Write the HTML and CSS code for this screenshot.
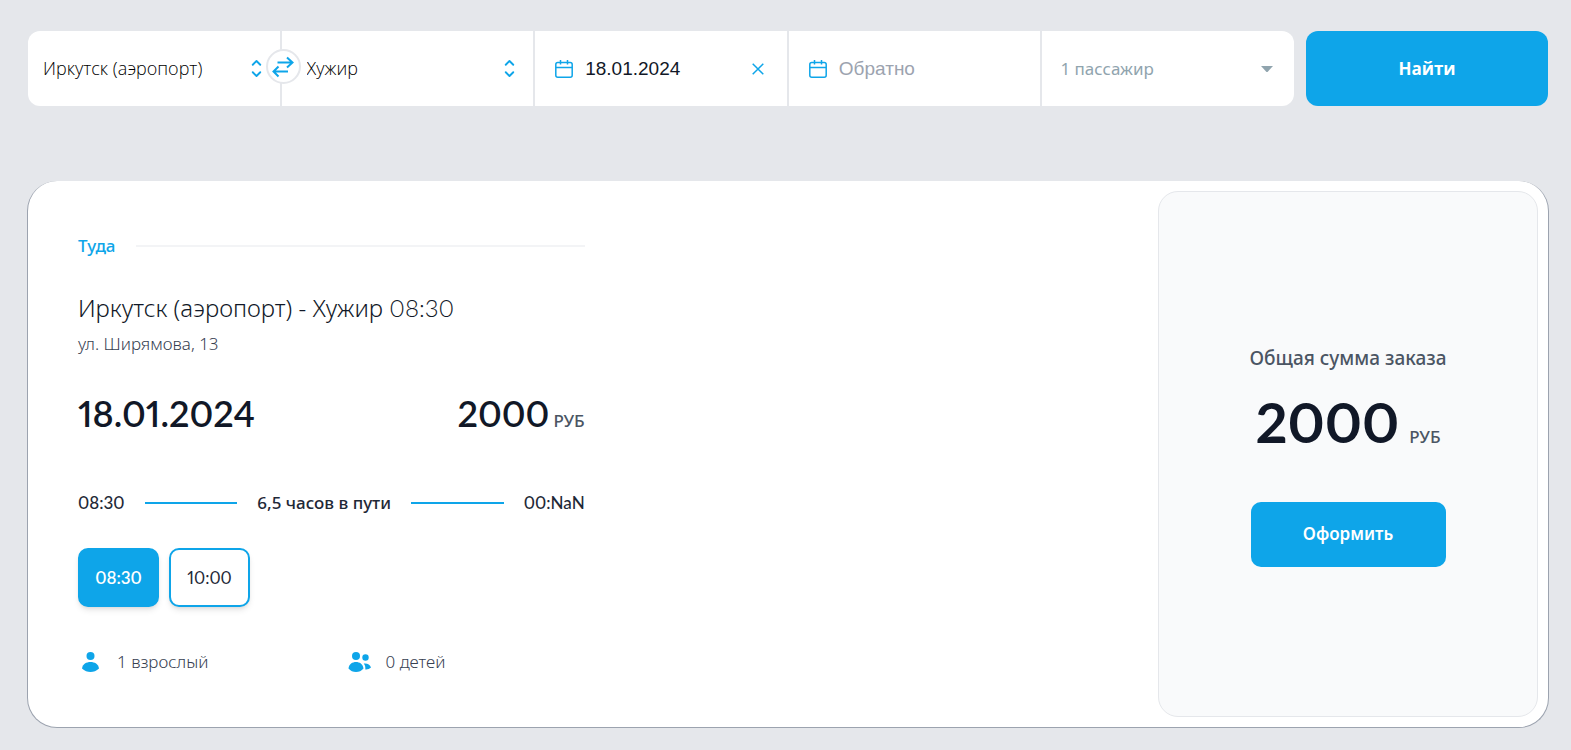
FILE: index.html
```html
<!DOCTYPE html>
<html lang="ru">
<head>
<meta charset="utf-8">
<meta name="viewport" content="width=device-width, initial-scale=1">
<title>Иркутск (аэропорт) - Хужир</title>
<link rel="stylesheet" href="styles.css">
</head>
<body>
<main class="page">
  <form class="search">
    <div class="fields">
      <div class="field place">
        <input class="place-input" type="text" aria-label="Откуда" value="Иркутск (аэропорт)">
        <button class="icon-button" type="button" aria-label="Список пунктов отправления">
          <svg class="updown" viewBox="0 0 20 20"><path d="M7 7l3-3 3 3m0 6l-3 3-3-3"/></svg>
        </button>
        <button class="swap" type="button" aria-label="Поменять местами">
          <svg class="swap-icon" viewBox="0 0 22 22"><path d="M5.500 6.500H20M15 1.500l5.500 5L15 11.500M16 15.500H2M6.500 10.500L1.500 15.500l5 5"/></svg>
        </button>
      </div>
      <div class="field place">
        <input class="place-input" type="text" aria-label="Куда" value="Хужир">
        <button class="icon-button" type="button" aria-label="Список пунктов прибытия">
          <svg class="updown" viewBox="0 0 20 20"><path d="M7 7l3-3 3 3m0 6l-3 3-3-3"/></svg>
        </button>
      </div>
      <div class="field date">
        <svg class="calendar" viewBox="0 0 18 18"><rect x="0.800" y="2.500" width="16.400" height="14.700" rx="2"/><path d="M1 7.500H17M5.500 0V4.500M12.500 0V4.500"/></svg>
        <input class="date-input" type="text" aria-label="Дата туда" value="18.01.2024">
        <button class="icon-button" type="button" aria-label="Очистить дату">
          <svg class="clear" viewBox="0 0 12 12"><path d="M0.700 0.700L11.300 11.300M11.300 0.700L0.700 11.300"/></svg>
        </button>
      </div>
      <div class="field date">
        <svg class="calendar" viewBox="0 0 18 18"><rect x="0.800" y="2.500" width="16.400" height="14.700" rx="2"/><path d="M1 7.500H17M5.500 0V4.500M12.500 0V4.500"/></svg>
        <input class="date-input" type="text" aria-label="Дата обратно" placeholder="Обратно">
      </div>
      <div class="field passengers">
        <select class="passengers-select" aria-label="Пассажиры"><option>1 пассажир</option></select>
        <svg class="caret" viewBox="0 0 12 6"><path d="M0 0H12L7 5.500Q6 6.500 5 5.500Z"/></svg>
      </div>
    </div>
    <button class="find" type="submit">Найти</button>
  </form>

  <article class="trip">
    <section class="details">
      <div class="direction"><span>Туда</span><i class="rule"></i></div>
      <h1 class="title">Иркутск (аэропорт) - Хужир <span class="title-time">08:30</span></h1>
      <p class="address">ул. Ширямова, 13</p>
      <div class="summary">
        <span class="big">18.01.2024</span>
        <span class="price"><span class="big">2000</span><span class="currency">РУБ</span></span>
      </div>
      <div class="timeline">
        <span class="num">08:30</span><i class="segment"></i><span>6,5 часов в пути</span><i class="segment"></i><span class="num">00:NaN</span>
      </div>
      <div class="times">
        <button class="time time-active" type="button">08:30</button>
        <button class="time" type="button">10:00</button>
      </div>
      <div class="people">
        <div class="person">
          <svg class="person-icon" viewBox="0 0 26 26"><circle cx="12.500" cy="7" r="4"/><path d="M4 19.500C4.500 15 8.500 13 12.500 13s8 2 8.500 6.500C18.500 22 15.500 23 12.500 23s-6-1-8.500-3.500Z"/></svg>
          <span>1 взрослый</span>
        </div>
        <div class="person">
          <svg class="person-icon" viewBox="0 0 26 26"><circle cx="9" cy="7" r="4"/><circle cx="18.500" cy="8.500" r="3.200"/><path d="M1.500 19.500C2 15 5.500 13 9 13s7 2 7.500 6.500C14.500 22 12 23 9 23s-5.500-1-7.500-3.500ZM16.700 14.600C20 14 23 15.500 24 18.500C22.500 20 20.500 20.600 18.300 20.400C18.600 18.200 18 16 16.700 14.600Z"/></svg>
          <span>0 детей</span>
        </div>
      </div>
    </section>
    <aside class="order">
      <div class="order-body">
        <p class="order-label">Общая сумма заказа</p>
        <p class="total"><span class="total-sum">2000</span><span class="currency">РУБ</span></p>
        <button class="checkout" type="button">Оформить</button>
      </div>
    </aside>
  </article>
</main>
</body>
</html>
```
FILE: styles.css
```css
* { box-sizing: border-box; }
body {
  margin: 0;
  background: #e5e7eb;
  color: #111827;
  font-family: "Noto Sans", "Open Sans", sans-serif;
  font-size: 17px;
  line-height: 24px;
}
h1, p { margin: 0; }
button, input, select { font: inherit; color: inherit; border: 0; padding: 0; background: none; }
button { cursor: pointer; }
svg { display: block; flex: none; }
.page { padding: 31px 23px 22px 28px; }

.search { display: flex; gap: 12px; }
.fields { flex: 1; display: grid; grid-template-columns: repeat(5, 1fr); gap: 2px; }
.field {
  position: relative;
  display: flex;
  align-items: center;
  height: 75px;
  min-width: 0;
  padding: 0 15px;
  background: #fff;
}
.field:first-child { border-radius: 12px 0 0 12px; }
.field:last-child { border-radius: 0 12px 12px 0; }
.field input, .field select { flex: 1; min-width: 0; width: 100%; }
.place-input { height: 42px; padding-bottom: 2px; color: #000; font-family: "Open Sans", sans-serif; font-size: 18px; font-weight: 300; }
.place + .place { padding-left: 25px; }
.icon-button { flex: none; }
.updown { width: 25px; height: 25px; margin-right: -4px; fill: none; stroke: #0ea5e9; stroke-width: 1.5; stroke-linecap: round; stroke-linejoin: round; }
.swap {
  position: absolute;
  z-index: 1;
  top: 18px;
  right: -21px;
  width: 35px;
  height: 35px;
  display: grid;
  place-items: center;
  border: 2px solid #e5e7eb;
  border-radius: 50%;
  background: #fff;
}
.swap-icon { width: 22px; height: 22px; fill: none; stroke: #0ea5e9; stroke-width: 2; }
.date { padding: 0 23px 0 20px; gap: 12px; }
.date-input { height: 40px; font-family: "Liberation Sans", Arial, sans-serif; font-size: 19px; }
.date-input::placeholder { color: #9ca3af; opacity: 1; }
.calendar { width: 18px; height: 18px; fill: none; stroke: #0ea5e9; stroke-width: 1.5; }
.clear { width: 12px; height: 12px; fill: none; stroke: #0ea5e9; stroke-width: 1.5; }
.passengers { padding: 0 21px 0 18px; }
.passengers-select { height: 40px; appearance: none; color: #90a4ae; }
.caret { width: 12px; height: 6px; fill: #90a4ae; }
.find { flex: none; width: 242px; border-radius: 12px; background: #0ea5e9; color: #fff; font-family: "Open Sans", sans-serif; font-weight: 700; }

.trip {
  display: flex;
  justify-content: space-between;
  margin: 75px -1px 0;
  border: 1px solid #9ca3af;
  border-top: 0;
  border-radius: 30px;
  background: #fff;
}
.details { width: 33.333%; margin: 53px 0 52px 50px; }
.direction { display: flex; align-items: center; gap: 20px; color: #0ea5e9; font-weight: 500; }
.rule { flex: 1; height: 2px; background: #f3f4f6; }
.num, .time, .big, .total-sum, .title-time { font-family: Lato, sans-serif; font-variant-numeric: proportional-nums; }
.title { margin-top: 34px; font-size: 24px; font-weight: 300; line-height: 32px; }
.title-time { font-weight: 300; }
.address { margin-top: 8px; color: #374151; font-weight: 300; }
.summary { display: flex; justify-content: space-between; margin-top: 34px; }
.big { font-size: 36px; font-weight: 600; line-height: 46px; }
.price, .total { display: flex; align-items: baseline; }
.price { gap: 4px; }
.currency { color: #4b5563; font-weight: 500; }
.timeline { display: flex; align-items: center; gap: 20px; margin-top: 55px; color: #1f2937; font-weight: 500; }
.segment { flex: 1; height: 2px; background: #0ea5e9; }
.times { display: flex; gap: 10px; margin-top: 33px; }
.time {
  width: 81px;
  height: 59px;
  border: 2px solid #0ea5e9;
  border-radius: 10px;
  background: #fff;
  box-shadow: 0 4px 6px -1px #0000001a, 0 2px 4px -2px #0000001a;
  color: #1f2937;
  font-size: 17px;
}
.time-active { background: #0ea5e9; color: #fff; font-weight: 600; }
.people { display: flex; margin-top: 42px; color: #374151; font-weight: 300; }
.person { flex: none; width: 53%; display: flex; align-items: center; gap: 13px; }
.person-icon { width: 26px; height: 26px; fill: #0ea5e9; }
.order {
  width: 25%;
  margin: 10px;
  display: grid;
  place-items: center;
  border: 1px solid #e5e7eb;
  border-radius: 20px;
  background: #f9fafb;
}
.order-body { display: flex; flex-direction: column; align-items: center; padding-top: 4px; }
.order-label { color: #4b5563; font-size: 19px; font-weight: 500; }
.total { gap: 10px; margin-top: 20px; }
.total-sum { font-size: 56px; font-weight: 700; line-height: 64px; }
.checkout { width: 195px; height: 65px; margin-top: 48px; border-radius: 10px; background: #0ea5e9; color: #fff; font-weight: 600; }
```
